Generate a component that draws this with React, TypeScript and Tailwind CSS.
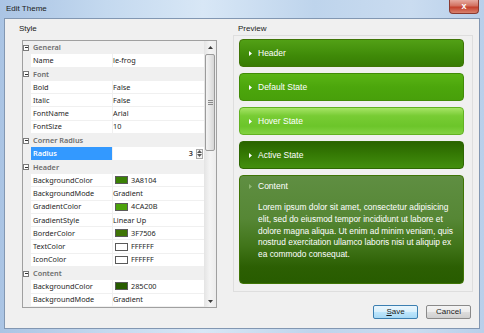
import React from "react";

type Row =
  | { cat: string }
  | { name: string; value?: string; swatch?: string; selected?: boolean };

const ROWS: Row[] = [
  { cat: "General" },
  { name: "Name", value: "le-frog" },
  { cat: "Font" },
  { name: "Bold", value: "False" },
  { name: "Italic", value: "False" },
  { name: "FontName", value: "Arial" },
  { name: "FontSize", value: "10" },
  { cat: "Corner Radius" },
  { name: "Radius", selected: true },
  { cat: "Header" },
  { name: "BackgroundColor", value: "3A8104", swatch: "#3a8104" },
  { name: "BackgroundMode", value: "Gradient" },
  { name: "GradientColor", value: "4CA20B", swatch: "#4ca20b" },
  { name: "GradientStyle", value: "Linear Up" },
  { name: "BorderColor", value: "3F7506", swatch: "#3f7506" },
  { name: "TextColor", value: "FFFFFF", swatch: "#ffffff" },
  { name: "IconColor", value: "FFFFFF", swatch: "#ffffff" },
  { cat: "Content" },
  { name: "BackgroundColor", value: "285C00", swatch: "#285c00" },
  { name: "BackgroundMode", value: "Gradient" },
];

function Tri({ dir, className = "" }: { dir: "up" | "down" | "right"; className?: string }) {
  const pts = dir === "up" ? "0,3 5,3 2.5,0" : dir === "down" ? "0,0 5,0 2.5,3" : "0,0 3,2.5 0,5";
  const w = dir === "right" ? 3 : 5;
  const h = dir === "right" ? 5 : 3;
  return (
    <svg width={w} height={h} viewBox={`0 0 ${w} ${h}`} className={className}>
      <polygon points={pts} fill="currentColor" />
    </svg>
  );
}

function GridRow({ row }: { row: Row }) {
  if ("cat" in row) {
    return (
      <div className="flex h-[13.3px] items-center bg-[#f0f0f0]">
        <div className="flex w-[8px] items-center">
          <div className="flex h-[6px] w-[6px] items-center justify-center border border-[#7a7a7a] bg-white">
            <div className="h-px w-[3px] bg-[#333]" />
          </div>
        </div>
        <span className="pl-[2px] font-semibold text-[#6d6d6d]">{row.cat}</span>
      </div>
    );
  }
  return (
    <div className="flex h-[13.3px]">
      <div className="w-[8px] bg-[#f0f0f0]" />
      <div
        className={`flex w-[82px] items-center border-r border-b border-[#f0f0f0] pl-[2px] ${
          row.selected ? "bg-[#3399ff] font-semibold text-white" : "text-[#1e1e1e]"
        }`}
      >
        {row.name}
      </div>
      <div className="flex flex-1 items-center border-b border-[#f0f0f0] bg-white text-[#1e1e1e]">
        {row.selected ? (
          <div className="flex flex-1 items-center justify-end">
            <span className="font-semibold text-[#333]">3</span>
            <div className="ml-[3px] mr-[1px] flex h-[10px] w-[7px] flex-col items-center justify-around border border-[#a8a8a8] bg-[#f4f4f4] text-[#555]">
              <Tri dir="up" />
              <Tri dir="down" />
            </div>
          </div>
        ) : (
          <>
            {row.swatch && (
              <div className="ml-[2px] mr-[3px] h-[8px] w-[13px] border border-[#5a5a5a]" style={{ background: row.swatch }} />
            )}
            <span>{row.value}</span>
          </>
        )}
      </div>
    </div>
  );
}

function PropertyGrid() {
  return (
    <div className="ml-[3px] mt-[5px] flex h-[268px] w-[195px] border border-[#a0a0a0] bg-white font-['Noto_Sans',sans-serif] text-[7.3px]">
      <div className="flex w-[181px] flex-col">
        {ROWS.map((row, i) => (
          <GridRow key={i} row={row} />
        ))}
      </div>
      <div className="flex w-[12px] flex-col bg-[linear-gradient(90deg,#e4e4e4,#f4f4f4_50%,#ececec)]">
        <div className="flex h-[12px] items-center justify-center text-[#3c3c3c]">
          <Tri dir="up" />
        </div>
        <div className="flex-1">
          <div className="ml-[1px] mt-px flex h-[97px] w-[10px] items-center justify-center rounded-[2px] border border-[#9b9b9b] bg-[linear-gradient(90deg,#f3f3f3,#e6e6e6_50%,#d6d6d6)]">
            <div className="flex flex-col gap-px">
              <div className="h-px w-[5px] bg-[#8a8a8a]" />
              <div className="h-px w-[5px] bg-[#8a8a8a]" />
              <div className="h-px w-[5px] bg-[#8a8a8a]" />
            </div>
          </div>
        </div>
        <div className="flex h-[12px] items-center justify-center text-[#3c3c3c]">
          <Tri dir="down" />
        </div>
      </div>
    </div>
  );
}

function Bar({ label, className }: { label: string; className: string }) {
  return (
    <div className={`flex h-[28px] w-[225px] items-center rounded-[4px] border pl-[9px] text-white ${className}`}>
      <Tri dir="right" className="text-white" />
      <span className="ml-[6px]">{label}</span>
    </div>
  );
}

export default function App() {
  return (
    <div className="relative flex h-[333px] w-[484px] flex-col bg-[linear-gradient(90deg,#aac4e4,#c4d9ef_22%,#d8e7f6_42%,#bed4ec_65%,#cadcf0_85%,#b8cfea)] px-[4px] pb-[4px] font-['Liberation_Sans',Arial,sans-serif] text-[#1a1a1a]">
      <div className="flex h-[18px] items-center pl-[2px] text-[8px] text-[#1b1b1b]">Edit Theme</div>
      <div className="absolute right-[5px] top-0 flex h-[14px] w-[30px] items-center justify-center rounded-b-[4px] border border-t-0 border-[#8a3a30] bg-[linear-gradient(to_bottom,#e6aaa0,#d2705f_45%,#c4402c_55%,#d8826e)] text-[9px] font-bold text-white">
        x
      </div>
      <div className="flex flex-1 border border-[#8297b2] bg-[#f0f0f0] text-[8px]">
        <div className="flex flex-col pl-[14px] pt-[3px]">
          <div className="h-[13px] leading-[13px]">Style</div>
          <PropertyGrid />
        </div>
        <div className="ml-[16px] flex flex-col pt-[3px]">
          <div className="h-[13px] pl-[5px] leading-[13px]">Preview</div>
          <div className="flex h-[257px] w-[240px] flex-col gap-[6px] border border-[#dedede] pl-[5px] pt-[3px] text-[8.5px]">
            <Bar label="Header" className="border-[#3f7506] bg-[linear-gradient(to_bottom,#52a016,#3f8a08_60%,#387c04)]" />
            <Bar label="Default State" className="border-[#418c07] bg-[linear-gradient(to_bottom,#5ab415,#4ca60c_50%,#48a00a)]" />
            <Bar
              label="Hover State"
              className="border-[#62b222] bg-[linear-gradient(to_bottom,#a6e466,#78cc34_30%,#6cc52a_70%,#82d242)]"
            />
            <Bar
              label="Active State"
              className="border-[#2e6802] bg-[linear-gradient(to_bottom,#2a6400,#347804_45%,#438f0e)]"
            />
            <div className="flex h-[109px] w-[225px] flex-col rounded-[4px] border border-[#3f7506] bg-[linear-gradient(to_bottom,#5f8e42,#568735_40%,#41751a_65%,#2c5f03_85%,#285c00)] text-white">
              <div className="mt-[4px] flex h-[12px] items-center pl-[9px]">
                <Tri dir="right" className="text-[#8fb774]" />
                <span className="ml-[6px]">Content</span>
              </div>
              <p className="mt-[10px] pl-[18px] pr-[7px] text-[8.4px] leading-[11.8px]">
                Lorem ipsum dolor sit amet, consectetur adipisicing elit, sed do eiusmod tempor incididunt ut labore et
                dolore magna aliqua. Ut enim ad minim veniam, quis nostrud exercitation ullamco laboris nisi ut aliquip
                ex ea commodo consequat.
              </p>
            </div>
          </div>
          <div className="mt-[13px] flex justify-end gap-[8px] pr-[2px]">
            <button className="flex h-[14px] w-[45px] items-center justify-center rounded-[2px] border border-[#3c7fb1] bg-[linear-gradient(to_bottom,#eaf6fd,#d9f0fc_50%,#bee6fd_51%,#a7d9f5)] text-[8px] text-[#1a1a1a]">
              <span className="underline">S</span>ave
            </button>
            <button className="flex h-[14px] w-[45px] items-center justify-center rounded-[2px] border border-[#8a8a8a] bg-[linear-gradient(to_bottom,#f4f4f4,#ebebeb_50%,#dddddd_51%,#cfcfcf)] text-[8px] text-[#1a1a1a]">
              Cancel
            </button>
          </div>
        </div>
      </div>
    </div>
  );
}
